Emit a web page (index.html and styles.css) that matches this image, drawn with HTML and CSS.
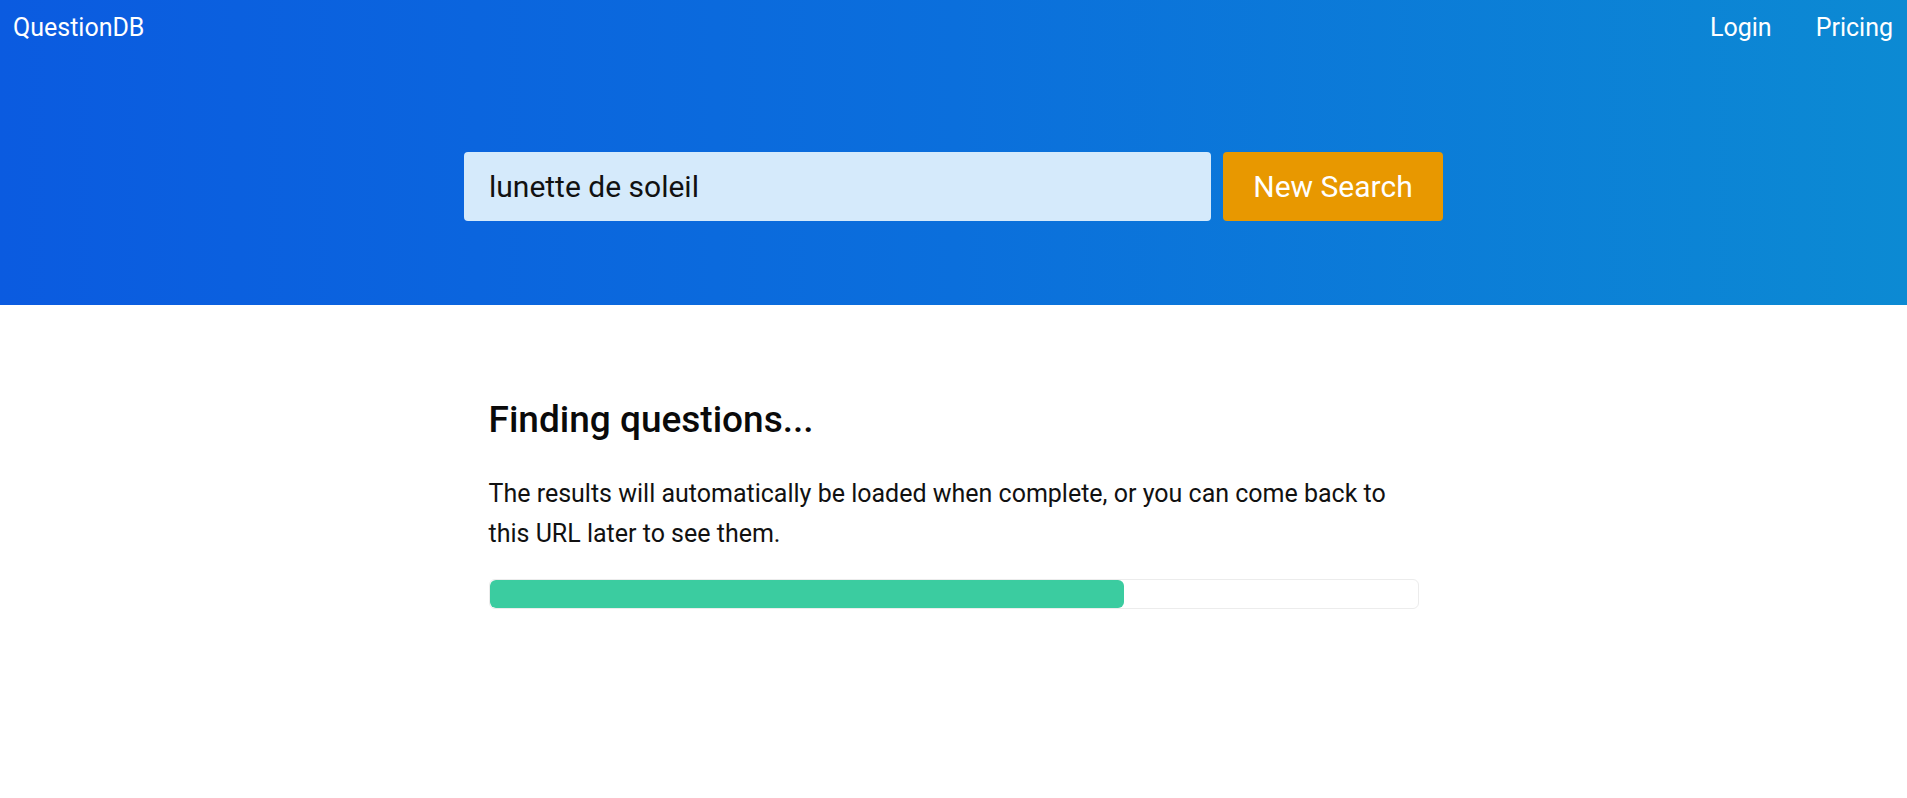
FILE: index.html
```html
<!DOCTYPE html>
<html lang="en">
<head>
    <meta charset="UTF-8">
    <meta name="viewport" content="width=device-width, initial-scale=1.0">
    <title>QuestionDB</title>
    <link rel="stylesheet" href="styles.css">
</head>
<body>
    <header class="hero">
        <nav class="topnav">
            <a class="brand" href="#">QuestionDB</a>
            <div class="navlinks">
                <a href="#">Login</a>
                <a href="#">Pricing</a>
            </div>
        </nav>
        <form class="search" onsubmit="return false">
            <input type="text" class="search-input" value="lunette de soleil">
            <button type="submit" class="search-btn">New Search</button>
        </form>
    </header>

    <main class="content">
        <h1>Finding questions...</h1>
        <p>The results will automatically be loaded when complete, or you can come back to this URL later to see them.</p>
        <div class="progress">
            <div class="progress-fill" style="width: 68.4%"></div>
        </div>
    </main>
</body>
</html>
```

FILE: styles.css
```css
body {
    margin: 0;
    font-family: Roboto, 'Liberation Sans', sans-serif;
    color: #111;
    background-color: #fff;
}
a {
    color: #fff;
    text-decoration: none;
}
.hero {
    height: 305px;
    box-sizing: border-box;
    background: linear-gradient(90deg, #0b5be0 0%, #0b6fdc 50%, #0c8ad3 100%);
}
.topnav {
    display: flex;
    justify-content: space-between;
    align-items: center;
    padding: 10px 14px 0 13px;
    font-size: 25px;
    line-height: 36px;
}
.navlinks {
    display: flex;
    gap: 44px;
}
.search {
    display: flex;
    gap: 12px;
    width: 979px;
    margin: 106px auto 0;
}
.search-input {
    flex: 1;
    height: 69px;
    box-sizing: border-box;
    padding: 0 25px;
    border: none;
    border-radius: 4px;
    background-color: #d5eafb;
    font-family: inherit;
    font-size: 30px;
    color: #111;
    outline: none;
}
.search-btn {
    width: 220px;
    height: 69px;
    border: none;
    border-radius: 4px;
    background-color: #e89800;
    color: #fff;
    font-family: inherit;
    font-size: 30px;
    cursor: pointer;
}
.content {
    width: 930px;
    margin: 92px auto 0;
}
h1 {
    margin: 0;
    font-size: 37px;
    font-weight: 500;
    line-height: 45px;
    color: #0a0a0a;
}
p {
    margin: 32px 0 0;
    font-size: 25px;
    line-height: 40px;
}
.progress {
    margin-top: 25px;
    height: 30px;
    border: 1px solid #ececec;
    border-radius: 6px;
    box-sizing: border-box;
    overflow: hidden;
}
.progress-fill {
    height: 100%;
    background-color: #3bcca0;
    border-radius: 6px;
}
```
